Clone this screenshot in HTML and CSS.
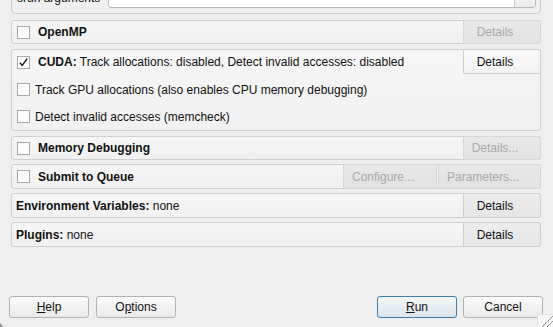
FILE: index.html
```html
<!DOCTYPE html>
<html>
<head>
<meta charset="utf-8">
<link rel="stylesheet" href="styles.css">
</head>
<body>
<div class="dialog">
  <div class="content">
    <div class="topbox">
      <span class="toplabel">srun arguments</span>
      <div class="combo"><div class="combo-btn"></div></div>
    </div>

    <div class="panel row r-openmp">
      <div class="lead"><span class="cb"></span><b>OpenMP</b></div>
      <div class="btn side disabled">Details</div>
    </div>

    <div class="panel cuda">
      <div class="row-inner">
        <div class="lead"><span class="cb checked"><svg viewBox="0 0 13 13" width="13" height="13"><path d="M2.8 6.6 L5.2 9.4 L10.2 2.6" fill="none" stroke="#111" stroke-width="1.4"/></svg></span><span><b>CUDA:</b> Track allocations: disabled, Detect invalid accesses: disabled</span></div>
        <div class="btn side active">Details</div>
      </div>
      <div class="sub"><span class="cb"></span>Track GPU allocations (also enables CPU memory debugging)</div>
      <div class="sub"><span class="cb"></span>Detect invalid accesses (memcheck)</div>
    </div>

    <div class="panel row r-mem">
      <div class="lead"><span class="cb"></span><b>Memory Debugging</b></div>
      <div class="btn side disabled">Details...</div>
    </div>

    <div class="panel row">
      <div class="lead"><span class="cb"></span><b>Submit to Queue</b></div>
      <div class="btn side disabled configure">Configure...</div>
      <div class="btn side disabled params">Parameters...</div>
    </div>

    <div class="panel row">
      <div class="lead plain"><span><b>Environment Variables:</b> none</span></div>
      <div class="btn side">Details</div>
    </div>

    <div class="panel row">
      <div class="lead plain"><span><b>Plugins:</b> none</span></div>
      <div class="btn side">Details</div>
    </div>
  </div>

  <div class="buttons">
    <div class="btn push"><u>H</u>elp</div>
    <div class="btn push">O<u>p</u>tions</div>
    <div class="spacer"></div>
    <div class="btn push default"><u>R</u>un</div>
    <div class="btn push">Cancel</div>
  </div>
</div>
<div class="grip"><svg viewBox="0 0 15 12" width="15" height="12"><path d="M4 12 L15 1 M9 12 L15 6" stroke="#9a9a9a" stroke-width="1"/></svg></div>
<div class="corner"></div>
</body>
</html>
```

FILE: styles.css
```css
html, body {
  margin: 0;
  padding: 0;
  width: 553px;
  height: 327px;
  overflow: hidden;
  background: #efefef;
  font-family: "Liberation Sans", Arial, sans-serif;
  font-size: 12px;
  color: #111;
}

.dialog {
  display: flex;
  flex-direction: column;
  height: 327px;
}

.content {
  display: flex;
  flex-direction: column;
  gap: 4px;
  padding: 0 12px 0 11px;
}

.topbox {
  margin-top: -16px;
  height: 30px;
  border: 1px solid #cdcdcd;
  border-radius: 4px;
  background: #f0f0f0;
  display: flex;
  align-items: center;
  padding: 0 4px 0 5px;
  margin-bottom: 2px;
  box-sizing: border-box;
}

.toplabel {
  width: 91px;
  position: relative;
  top: -1px;
}

.combo {
  flex: 1;
  height: 23px;
  margin-top: -5px;
  background: #fff;
  border: 1px solid #b8b8b8;
  border-radius: 3px;
  box-sizing: border-box;
  display: flex;
  justify-content: flex-end;
}

.combo-btn {
  width: 20px;
  border-left: 1px solid #c8c8c8;
  background: linear-gradient(#f8f8f8, #ebebeb);
  border-radius: 0 3px 3px 0;
}

.panel {
  border: 1px solid #d0d0d0;
  border-radius: 3px;
  background: linear-gradient(#f6f6f6, #f1f1f1);
  box-sizing: border-box;
}

.row {
  display: flex;
  height: 25px;
}

.r-openmp {
  height: 24px;
  margin-bottom: 1px;
}

.r-mem {
  height: 24px;
}

.lead {
  flex: 1;
  display: flex;
  align-items: center;
  padding-left: 5px;
  white-space: nowrap;
}

.lead.plain {
  padding-left: 4px;
}

.cb {
  width: 13px;
  height: 13px;
  border: 1px solid #a8a8a8;
  background: #fff;
  box-sizing: border-box;
  display: inline-block;
  margin-right: 8px;
  flex: none;
  position: relative;
}

.cb svg {
  position: absolute;
  left: -1px;
  top: -1px;
}

b {
  font-weight: bold;
}

.btn {
  display: flex;
  align-items: center;
  justify-content: center;
  box-sizing: border-box;
  white-space: nowrap;
}

.side {
  width: 78px;
  margin: -1px -1px -1px 0;
  padding-right: 14px;
  border: 1px solid #cfcfcf;
  border-radius: 0 3px 3px 0;
  background: linear-gradient(#ececec, #e6e6e6);
  color: #111;
}

.side.disabled {
  color: #a9a9a9;
  background: linear-gradient(#e8e8e8, #e2e2e2);
  border-color: #d6d6d6;
}

.side.active {
  background: linear-gradient(#fafafa, #f3f3f3);
  border-color: #cfcfcf;
  height: 25px;
}

.side.configure {
  width: 94px;
  border-radius: 0;
  margin-right: 1px;
}

.side.params {
  width: 103px;
  padding-right: 13px;
}

.cuda {
  height: 82px;
  margin-bottom: 1px;
}

.row-inner {
  display: flex;
  height: 24px;
}

.sub {
  display: flex;
  align-items: center;
  padding-left: 5px;
  height: 13px;
  margin-top: 9px;
}

.sub + .sub {
  margin-top: 14px;
}

.sub .cb {
  margin-right: 5px;
}

.buttons {
  margin-top: auto;
  display: flex;
  gap: 7px;
  padding: 0 10px 9px 9px;
}

.spacer {
  flex: 1;
}

.push {
  width: 80px;
  height: 22px;
  border: 1px solid #b3b3b3;
  border-radius: 3px;
  background: linear-gradient(#fbfbfb, #eaeaea);
  color: #111;
  font-size: 12px;
}

.push.default {
  border-color: #3f7db0;
  background: linear-gradient(#f3f6f8, #dde6ec);
  margin-right: -1px;
}

.grip {
  position: absolute;
  right: 0;
  bottom: 0;
  width: 15px;
  height: 12px;
  background: #f7f7f7;
  border-left: 1px solid #e0e0e0;
  border-top: 1px solid #e0e0e0;
}

.grip svg {
  display: block;
}

.corner {
  position: absolute;
  left: 0;
  bottom: 0;
  width: 0;
  height: 0;
  border-left: 4px solid #9a9a9a;
  border-top: 4px solid transparent;
}
```
